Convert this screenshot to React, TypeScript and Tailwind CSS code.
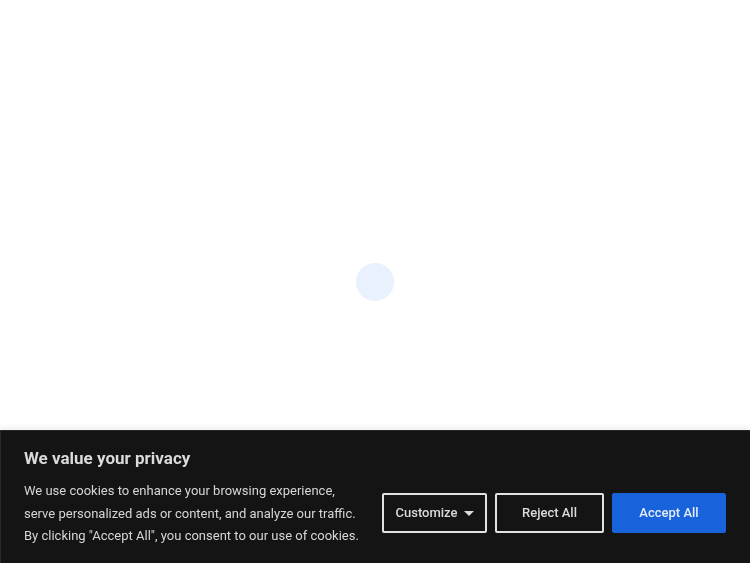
const buttonBase =
  "h-10 flex items-center justify-center text-[13px] font-medium rounded-[2px]";

export default function App() {
  return (
    <div
      className="relative h-screen w-full bg-white overflow-hidden"
      style={{ fontFamily: "Roboto, 'Liberation Sans', sans-serif" }}
    >
      <div className="h-full flex items-center justify-center">
        <div className="w-[38px] h-[38px] rounded-full bg-[#e8f1fd]" />
      </div>

      <div className="fixed bottom-0 left-0 right-0 h-[133px] bg-[#141414] border-t border-l border-[#2a2a2a] shadow-[0_-2px_6px_rgba(0,0,0,0.08)] pl-[23px] pr-6 pt-[15px]">
        <h2 className="text-[17px] leading-6 font-bold text-[#dadada]">We value your privacy</h2>
        <div className="mt-[10px] flex items-start gap-5">
          <p className="flex-1 text-[13px] leading-[22.5px] text-[#d6d6d6]">
            We use cookies to enhance your browsing experience, serve personalized ads or content,
            and analyze our traffic. By clicking "Accept All", you consent to our use of cookies.
          </p>
          <div className="mt-[13px] flex gap-2">
            <button className={`${buttonBase} gap-[6px] w-[105px] border-2 border-[#e2e2e2] text-[#dadada]`}>
              Customize
              <svg width="10" height="5" viewBox="0 0 10 5" className="fill-[#dadada]">
                <path d="M0 0 L10 0 L5 5 Z" />
              </svg>
            </button>
            <button className={`${buttonBase} w-[109px] border-2 border-[#e2e2e2] text-[#dadada]`}>
              Reject All
            </button>
            <button className={`${buttonBase} w-[114px] bg-[#1863dc] border border-[#1863dc] text-[#e3ebf9]`}>
              Accept All
            </button>
          </div>
        </div>
      </div>
    </div>
  );
}
